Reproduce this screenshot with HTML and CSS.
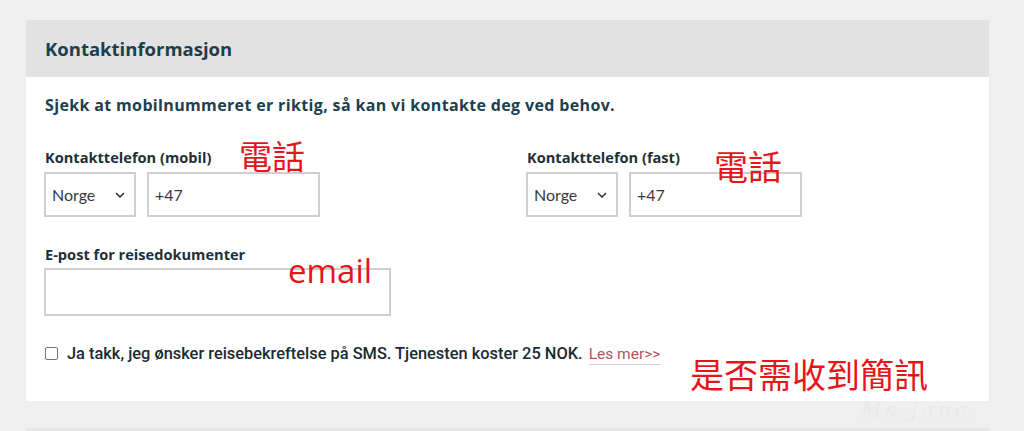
FILE: index.html
```html
<!DOCTYPE html>
<html lang="no">
<head>
<meta charset="utf-8">
<title>Kontaktinformasjon</title>
<link rel="stylesheet" href="styles.css">
</head>
<body>
<section class="card">
  <header class="card-header">
    <h2 class="card-title">Kontaktinformasjon</h2>
  </header>
  <div class="card-body">
    <p class="intro">Sjekk at mobilnummeret er riktig, så kan vi kontakte deg ved behov.</p>
    <div class="phone-row">
      <div class="field">
        <label class="label">Kontakttelefon (mobil)</label>
        <div class="controls">
          <div class="select">
            <span>Norge</span>
            <svg class="chev" width="10" height="6" viewBox="0 0 10 6"><path d="M1 1l4 4 4-4" fill="none" stroke="#333" stroke-width="1.6"/></svg>
          </div>
          <div class="input phone">+47</div>
        </div>
        <span class="note note-phone1">電話</span>
      </div>
      <div class="field">
        <label class="label">Kontakttelefon (fast)</label>
        <div class="controls">
          <div class="select">
            <span>Norge</span>
            <svg class="chev" width="10" height="6" viewBox="0 0 10 6"><path d="M1 1l4 4 4-4" fill="none" stroke="#333" stroke-width="1.6"/></svg>
          </div>
          <div class="input phone">+47</div>
        </div>
        <span class="note note-phone2">電話</span>
      </div>
    </div>
    <div class="field email-field">
      <label class="label">E-post for reisedokumenter</label>
      <div class="input email"></div>
      <span class="note note-email">email</span>
    </div>
    <div class="sms-row">
      <span class="checkbox"></span>
      <span class="sms-text">Ja takk, jeg ønsker reisebekreftelse på SMS. Tjenesten koster 25 NOK.</span>
      <a class="more" href="#">Les mer&gt;&gt;</a>
      <span class="note note-sms">是否需收到簡訊</span>
    </div>
    <span class="watermark">Ms.Jane.</span>
  </div>
</section>
<div class="next-card"></div>
</body>
</html>
```
FILE: styles.css
```css
html, body {
  margin: 0;
  padding: 0;
}
body {
  background: #efefef;
  padding-top: 20px;
  font-family: "Open Sans", "Lato", sans-serif;
  color: #1c3a47;
  height: 431px;
  overflow: hidden;
  box-sizing: border-box;
}
.card {
  margin-left: 26px;
  width: 963px;
}
.card-header {
  height: 57px;
  background: #e2e2e2;
  padding: 0 19px;
  display: flex;
  align-items: center;
}
.card-title {
  margin: 0;
  font-size: 18.5px;
  font-weight: 700;
  color: #1c3f4e;
}
.card-body {
  position: relative;
  background: #fff;
  height: 324px;
  box-sizing: border-box;
  padding: 17px 18px 0;
}
.intro {
  margin: 0 0 0 1px;
  font-size: 16px;
  font-weight: 700;
  color: #1c3f4e;
  line-height: 22px;
  letter-spacing: 0.35px;
}
.phone-row {
  display: grid;
  grid-template-columns: 482px 1fr;
  margin-top: 32px;
}
.field {
  position: relative;
  display: flex;
  flex-direction: column;
}
.label {
  font-size: 14.6px;
  font-weight: 700;
  color: #1e2f38;
  line-height: 18px;
  margin-left: 1px;
  margin-bottom: 6px;
}
.controls {
  display: flex;
  gap: 11px;
}
.select {
  width: 92px;
  height: 45px;
  box-sizing: border-box;
  border: 2px solid #cfcfcf;
  display: flex;
  align-items: center;
  justify-content: space-between;
  padding: 0 9px 0 6px;
  font-family: "Lato", sans-serif;
  font-size: 16px;
  color: #3a3a3a;
}
.chev {
  display: block;
}
.input {
  height: 45px;
  box-sizing: border-box;
  border: 2px solid #cfcfcf;
  display: flex;
  align-items: center;
  padding: 0 6px;
  font-family: "Lato", sans-serif;
  font-size: 16px;
  color: #3a3a3a;
}
.phone {
  width: 173px;
}
.email-field {
  margin-top: 28px;
}
.label + .email {
  margin-top: -1px;
}
.email {
  width: 347px;
  height: 48px;
}
.sms-row {
  display: flex;
  align-items: center;
  margin-top: 26px;
  position: relative;
}
.checkbox {
  width: 11px;
  height: 11px;
  border: 1px solid #767676;
  border-radius: 2px;
  margin-left: 1px;
  margin-right: 9px;
  flex: none;
}
.sms-text {
  font-family: "Roboto", sans-serif;
  font-size: 16.4px;
  font-weight: 500;
  color: #1b2b33;
}
.more {
  margin-left: 6px;
  font-family: "Roboto", sans-serif;
  font-size: 15.5px;
  color: #b8505f;
  text-decoration: none;
  border-bottom: 1px solid #d0d0d0;
  line-height: 20px;
  padding-top: 2px;
}
.note {
  position: absolute;
  color: #e8141c;
  font-family: "Noto Sans CJK TC", "Noto Sans CJK SC", sans-serif;
  font-weight: 400;
  line-height: 1;
  white-space: nowrap;
}
.note-phone1 {
  left: 195px;
  top: -9px;
  font-size: 33px;
}
.note-phone2 {
  left: 188px;
  top: 1px;
  font-size: 34px;
}
.note-email {
  left: 244px;
  top: 9px;
  font-family: "Open Sans", sans-serif;
  font-size: 33px;
}
.note-sms {
  left: 646px;
  top: 15px;
  font-size: 34px;
}
.watermark {
  position: absolute;
  left: 835px;
  top: 323px;
  font-family: "DejaVu Serif", serif;
  font-style: italic;
  font-size: 20px;
  line-height: 1;
  color: rgba(230, 230, 230, 0.6);
  letter-spacing: 4px;
}
.next-card {
  margin: 27px 0 0 26px;
  width: 963px;
  height: 20px;
  background: #e6e6e6;
}
```
